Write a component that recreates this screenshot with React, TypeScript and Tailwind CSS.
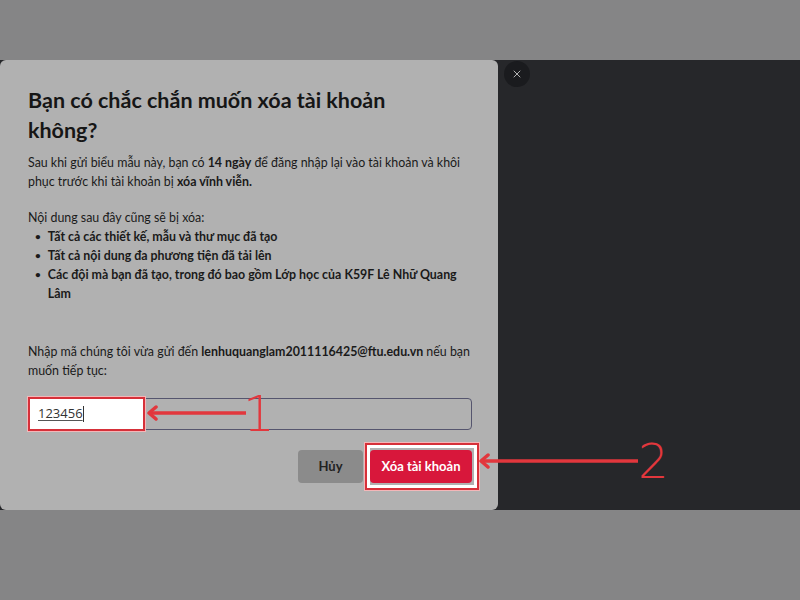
import { X } from 'lucide-react'

const bullets = [
  'Tất cả các thiết kế, mẫu và thư mục đã tạo',
  'Tất cả nội dung đa phương tiện đã tải lên',
  'Các đội mà bạn đã tạo, trong đó bao gồm Lớp học của K59F Lê Nhữ Quang Lâm',
]

function Arrow({ width }: { width: number }) {
  return (
    <svg width={width} height="16" viewBox={`0 0 ${width} 16`} fill="none">
      <path d={`M3 8 H${width}`} stroke="#e2373d" strokeWidth="3.5" />
      <path d="M10 2 L3 8 L10 14" stroke="#e2373d" strokeWidth="3.5" strokeLinecap="round" strokeLinejoin="round" />
    </svg>
  )
}

export default function App() {
  return (
    <div className="relative w-[800px] h-[600px] bg-[#858586] flex flex-col font-['Lato',sans-serif] text-[#1a1a1a]">
      <div className="h-[60px] shrink-0" />

      <div className="h-[450px] shrink-0 flex bg-[#26272a]">
        {/* Modal */}
        <div className="w-[498px] bg-[#b1b1b1] rounded-md pl-[28px] pr-[24px] pt-[25px] flex flex-col">
          <h2 className="text-[21.5px] leading-[30px] font-bold text-[#161616]">
            Bạn có chắc chắn muốn xóa tài khoản
            <br />
            không?
          </h2>

          <p className="mt-[8px] text-[12.4px] leading-[19px]">
            Sau khi gửi biểu mẫu này, bạn có <b className="font-bold">14 ngày</b> để đăng nhập lại vào tài khoản và khôi
            <br />
            phục trước khi tài khoản bị <b className="font-bold">xóa vĩnh viễn.</b>
          </p>

          <p className="mt-[17px] text-[12.4px] leading-[19px]">Nội dung sau đây cũng sẽ bị xóa:</p>
          <ul className="text-[12.4px] leading-[19px] font-bold">
            {bullets.map(b => (
              <li key={b} className="flex gap-[7px] pl-[7px]">
                <span className="text-[10px] shrink-0">•</span>
                <span className="pr-[2px]">{b}</span>
              </li>
            ))}
          </ul>

          <p className="mt-[39px] text-[12.4px] leading-[19px]">
            Nhập mã chúng tôi vừa gửi đến <b className="font-bold">lenhuquanglam2011116425@ftu.edu.vn</b> nếu bạn
            <br />
            muốn tiếp tục:
          </p>

          <div className="mt-[18px] mr-[2px] h-[32px] border border-[#55556e] rounded-[4px] flex items-center">
            <div className="relative h-[34px] -ml-px -my-px w-[117px] bg-white border-2 border-[#d63039] shadow-[0_0_0_1px_#f4b6b8] flex items-center pl-[8px]">
              <span className="text-[13px] text-[#333] underline decoration-[#555] underline-offset-2 font-['Open_Sans',sans-serif]">123456</span>
              <span className="w-px h-[16px] bg-[#333]" />
            </div>
          </div>

          <div className="mt-[20px] mr-[2px] flex justify-end gap-[7px]">
            <button className="w-[65px] h-[33px] rounded-[4px] bg-[#8b8b8b] text-[13px] font-bold text-[#222]">Hủy</button>
            <button className="w-[102px] h-[33px] rounded-[4px] bg-[#d8173b] text-[13px] font-bold text-white">
              Xóa tài khoản
            </button>
          </div>
        </div>
        <div className="flex-1" />
      </div>

      <div className="flex-1" />

      {/* Close button */}
      <div className="absolute left-[504px] top-[61px] w-[26px] h-[26px] rounded-full bg-[#1a1b1e] flex items-center justify-center">
        <X className="w-[12px] h-[12px] text-[#c8c8c8]" strokeWidth={1.75} />
      </div>

      {/* Annotation 1 */}
      <div className="absolute left-[146px] top-[405px]">
        <Arrow width={100} />
      </div>
      <span className="absolute left-[243px] top-[384px] text-[50px] leading-[60px] text-[#e2373d] font-['DejaVu_Sans',sans-serif] font-extralight">1</span>

      {/* Annotation 2 */}
      <div className="absolute left-[365px] top-[443px] w-[114px] h-[47px] border-2 border-[#d63039] shadow-[inset_0_0_0_3px_white,0_0_0_1px_#f4b6b8]" />
      <div className="absolute left-[478px] top-[453px]">
        <Arrow width={160} />
      </div>
      <span className="absolute left-[638px] top-[431px] text-[48px] leading-[60px] text-[#e2373d] font-['DejaVu_Sans',sans-serif] font-extralight">2</span>
    </div>
  )
}
